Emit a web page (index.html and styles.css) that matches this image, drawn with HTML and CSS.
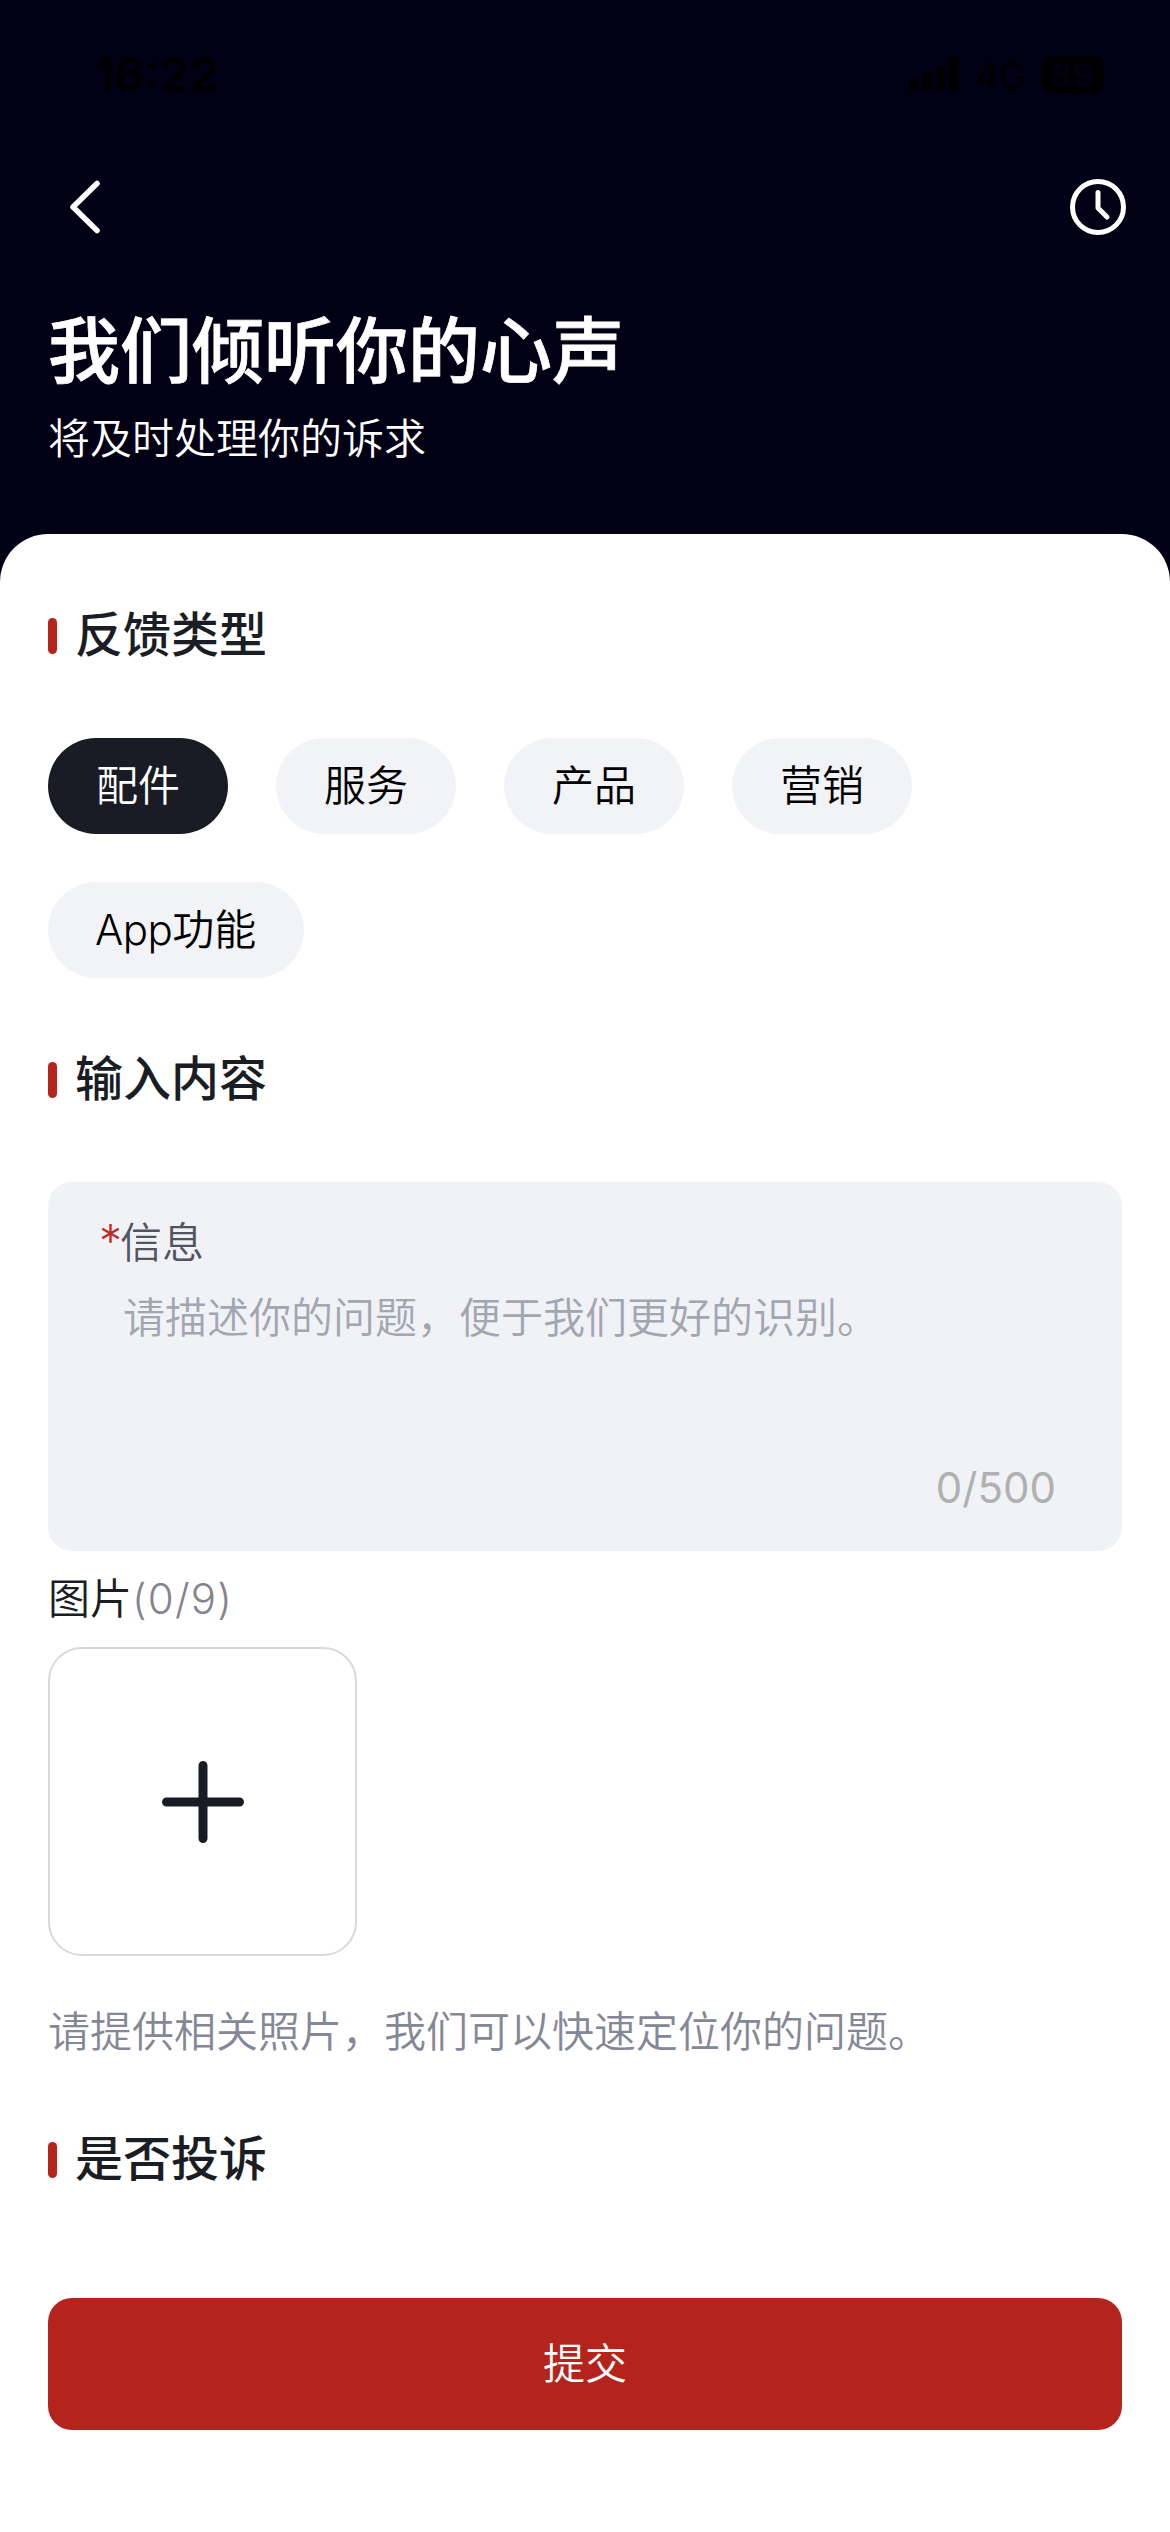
FILE: index.html
```html
<!DOCTYPE html>
<html lang="zh-CN">
<head>
<meta charset="utf-8">
<title>意见反馈</title>
<link rel="stylesheet" href="styles.css">
</head>
<body>
<div class="page">
  <header class="hero">
    <div class="status">
      <span class="status-time">16:22</span>
      <div class="status-right">
        <svg class="signal" viewBox="0 0 50 34"><rect x="0" y="21" width="9" height="13" rx="2"/><rect x="13.500" y="16" width="9" height="18" rx="2"/><rect x="27" y="9" width="9" height="25" rx="2"/><rect x="40.500" y="0" width="9" height="34" rx="2"/></svg>
        <span class="network">4G</span>
        <span class="battery">89</span>
      </div>
    </div>
    <nav class="nav">
      <svg class="back" viewBox="0 0 36 60"><path d="M30 6.500 6 30l24 23.500"/></svg>
      <svg class="history" viewBox="0 0 60 60"><circle cx="30" cy="30" r="25.500"/><path d="M30 15.500V31l9 9"/></svg>
    </nav>
    <h1 class="title">我们倾听你的心声</h1>
    <p class="subtitle">将及时处理你的诉求</p>
  </header>
  <main class="sheet">
    <h2 class="section"><span class="section-text">反馈类型</span></h2>
    <div class="chips">
      <button class="chip chip-active">配件</button>
      <button class="chip">服务</button>
      <button class="chip">产品</button>
      <button class="chip">营销</button>
      <button class="chip"><span class="latin">App</span>功能</button>
    </div>
    <h2 class="section"><span class="section-text">输入内容</span></h2>
    <div class="message">
      <div class="message-label"><span class="required">*</span>信息</div>
      <div class="placeholder">请描述你的问题，便于我们更好的识别。</div>
      <div class="counter">0/500</div>
    </div>
    <div class="photo-label">图片<span class="photo-count">(0/9)</span></div>
    <button class="upload"><svg class="plus" viewBox="0 0 82 82"><path d="M41 4.500v73M4.500 41h73"/></svg></button>
    <p class="hint">请提供相关照片，我们可以快速定位你的问题。</p>
    <h2 class="section section-last"><span class="section-text">是否投诉</span></h2>
    <button class="submit">提交</button>
  </main>
</div>
</body>
</html>
```
FILE: styles.css
```css
* {
  box-sizing: border-box;
  margin: 0;
  padding: 0;
}

body {
  width: 1170px;
  height: 2532px;
  overflow: hidden;
  background: #010014;
  color: #1b1d24;
  font-family: Inter, "Noto Sans CJK SC", sans-serif;
  font-size: 42px;
  font-weight: 350;
  line-height: 60px;
}

button {
  border: 0;
  font: inherit;
  color: inherit;
}

.page {
  height: 2532px;
  display: flex;
  flex-direction: column;
}

.hero {
  height: 534px;
  flex: none;
  padding: 0 42px 0 48px;
  color: #fff;
}

.status {
  height: 148px;
  display: flex;
  align-items: center;
  justify-content: space-between;
  padding: 0 24px 0 47px;
  color: #000;
}

.status-time {
  font-size: 47px;
  font-weight: 600;
}

.status-right {
  display: flex;
  align-items: center;
}

.signal {
  width: 50px;
  height: 34px;
}

.network {
  margin: 4px 15px 0 16px;
  font-size: 38px;
  font-weight: 400;
  letter-spacing: -1px;
}

.battery {
  width: 63px;
  height: 37px;
  border-radius: 11px;
  background: #000;
  color: #010014;
  font-size: 33px;
  font-weight: 700;
  line-height: 38px;
  text-align: center;
}

.nav {
  height: 118px;
  display: flex;
  align-items: center;
  justify-content: space-between;
  padding-left: 19px;
}

.back,
.history {
  fill: none;
  stroke: #fff;
  stroke-linecap: round;
  stroke-linejoin: round;
}

.back {
  width: 36px;
  height: 60px;
  stroke-width: 5.5;
}

.history {
  width: 60px;
  height: 60px;
  stroke-width: 5;
}

.title {
  margin-top: 33px;
  font-size: 72px;
  font-weight: 500;
  line-height: 104px;
  -webkit-text-stroke: 0.8px #fff;
}

.subtitle {
  margin-top: 6px;
}

.sheet {
  flex: 1;
  padding: 0 48px;
  border-radius: 48px 48px 0 0;
  background: #fff;
}

.section {
  height: 204px;
  display: flex;
  align-items: center;
  gap: 18px;
  font-size: 48px;
  font-weight: 500;
}

.section::before {
  content: "";
  width: 9px;
  height: 36px;
  border-radius: 5px;
  background: #b4241d;
}

.section-text {
  margin-bottom: 2px;
}

.chips {
  display: flex;
  flex-wrap: wrap;
  gap: 48px;
}

.chip {
  height: 96px;
  padding: 0 48px;
  border-radius: 48px;
  background: #f1f3f7;
  color: #000;
}

.chip-active {
  background: #191c24;
  color: #fff;
}

.latin {
  margin-left: -1px;
  letter-spacing: -0.5px;
}

.message {
  height: 369px;
  padding: 31px 66px 0 51px;
  border-radius: 24px;
  background: #f1f2f6;
}

.message-label {
  height: 60px;
  color: #52545f;
}

.required {
  display: inline-block;
  width: 21px;
  color: #c4291f;
  font-size: 46px;
  line-height: 40px;
}

.placeholder {
  margin-top: 15px;
  padding-left: 24px;
  color: #a2a6b0;
}

.counter {
  margin-top: 110px;
  color: #b0b0b0;
  font-weight: 400;
  text-align: right;
}

.photo-label {
  margin-top: 18px;
}

.photo-count {
  color: #84848f;
  letter-spacing: 1.2px;
}

.upload {
  width: 309px;
  height: 309px;
  margin-top: 18px;
  display: flex;
  align-items: center;
  justify-content: center;
  border: 2px solid #d8d9db;
  border-radius: 34px;
  background: #fff;
}

.plus {
  width: 82px;
  height: 82px;
  fill: none;
  stroke: #191c24;
  stroke-width: 9;
  stroke-linecap: round;
}

.hint {
  margin-top: 46px;
  color: #848896;
}

.section-last {
  height: 196px;
}

.submit {
  width: 100%;
  height: 132px;
  margin-top: 40px;
  border-radius: 24px;
  background: #b4241d;
  color: #fff;
}
```
